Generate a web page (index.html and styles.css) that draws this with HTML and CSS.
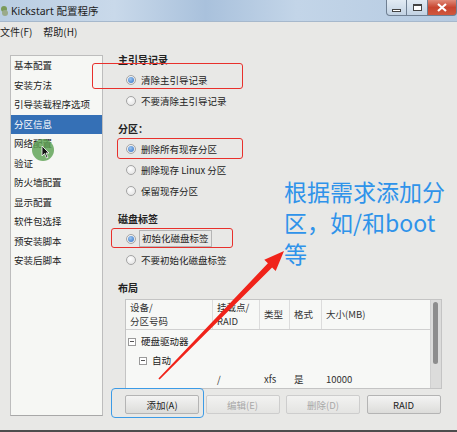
FILE: index.html
```html
<!DOCTYPE html>
<html lang="zh-CN">
<head>
  <meta charset="UTF-8" />
  <title>Kickstart 配置程序</title>
  <link rel="stylesheet" href="styles.css">
</head>
<body>
  <div class="window">

    <header class="titlebar">
      <svg class="app-icon" width="9" height="12" viewBox="0 0 9 12">
        <circle cx="4" cy="4" r="3" fill="#7a9a5a"/>
        <circle cx="5" cy="8" r="3" fill="#9aaa8a"/>
      </svg>
      <span class="title">Kickstart 配置程序</span>
      <div class="win-buttons">
        <span class="wb wb-min"><i></i></span>
        <span class="wb wb-max"><i></i></span>
        <span class="wb wb-close">
          <svg width="10" height="9" viewBox="0 0 10 9"><path d="M1 1 L9 8 M9 1 L1 8" stroke="#fff" stroke-width="2.2"/></svg>
        </span>
      </div>
    </header>

    <nav class="menubar">
      <span>文件(F)</span>
      <span>帮助(H)</span>
    </nav>

    <div class="content">
      <ul class="sidebar">
        <li>基本配置</li>
        <li>安装方法</li>
        <li>引导装载程序选项</li>
        <li class="active">分区信息</li>
        <li>网络配置</li>
        <li>验证</li>
        <li>防火墙配置</li>
        <li>显示配置</li>
        <li>软件包选择</li>
        <li>预安装脚本</li>
        <li>安装后脚本</li>
      </ul>

      <div class="panel">
        <section class="group">
          <h3>主引导记录</h3>
          <label class="radio checked"><span class="dot"></span>清除主引导记录</label>
          <label class="radio"><span class="dot"></span>不要清除主引导记录</label>
        </section>

        <section class="group">
          <h3>分区：</h3>
          <label class="radio checked"><span class="dot"></span>删除所有现存分区</label>
          <label class="radio"><span class="dot"></span>删除现存 Linux 分区</label>
          <label class="radio"><span class="dot"></span>保留现存分区</label>
        </section>

        <section class="group">
          <h3>磁盘标签</h3>
          <label class="radio checked"><span class="dot"></span><span class="focus">初始化磁盘标签</span></label>
          <label class="radio"><span class="dot"></span>不要初始化磁盘标签</label>
        </section>

        <section class="group">
          <h3>布局</h3>
          <div class="table">
            <div class="table-main">
              <div class="row head">
                <div class="cell">设备/<br>分区号码</div>
                <div class="cell">挂载点/<br>RAID</div>
                <div class="cell">类型</div>
                <div class="cell">格式</div>
                <div class="cell">大小(MB)</div>
              </div>
              <div class="tbody">
                <div class="tree"><span class="toggle"></span>硬盘驱动器</div>
                <div class="tree level2"><span class="toggle"></span>自动</div>
                <div class="row">
                  <div class="cell"></div>
                  <div class="cell">/</div>
                  <div class="cell">xfs</div>
                  <div class="cell">是</div>
                  <div class="cell">10000</div>
                </div>
              </div>
            </div>
            <div class="scrollbar"><span class="thumb"></span></div>
          </div>

          <div class="buttons">
            <button class="btn">添加(A)</button>
            <button class="btn" disabled>编辑(E)</button>
            <button class="btn" disabled>删除(D)</button>
            <button class="btn">RAID</button>
          </div>
        </section>
      </div>
    </div>

    <div class="bottom-edge"></div>

    <!-- 标注 -->
    <div class="mark mark-mbr"></div>
    <div class="mark mark-part"></div>
    <div class="mark mark-label"></div>
    <div class="mark-blue"></div>
    <div class="click-dot"></div>
    <svg class="cursor" width="9" height="14" viewBox="0 0 9 14">
      <path d="M1 1 L1 11 L3.5 8.5 L5.5 13 L7 12.3 L5 8 L8 8 Z" fill="#111" stroke="#fff" stroke-width="0.8"/>
    </svg>
    <p class="note">根据需求添加分<br>区，如/和boot<br>等</p>
    <svg class="arrow" width="457" height="432" viewBox="0 0 457 432">
      <polygon points="158.4,378.4 267.9,263.2 264.3,259.7 284,251 275.7,270.9 272.1,267.4 159.6,379.6" fill="#f0231a"/>
    </svg>
  </div>
</body>
</html>
```

FILE: styles.css
```css
* {
  box-sizing: border-box;
}

body {
  margin: 0;
  padding: 0;
  font-family: "Noto Sans CJK SC", "Noto Sans", sans-serif;
  font-size: 9.5px;
  color: #222;
  background: #e8e8e6;
}

.window {
  position: relative;
  width: 457px;
  height: 432px;
  overflow: hidden;
  background: #e8e8e6;
  display: flex;
  flex-direction: column;
}

/* 标题栏 */
.titlebar {
  height: 22px;
  display: flex;
  align-items: center;
  background: linear-gradient(to right, #b9cde2, #c9d9ea 25%, #a9c1dc 45%, #c3d5e8 65%, #b5cae1);
  border-bottom: 1px solid #a6b8cc;
}

.app-icon {
  margin-right: 2px;
}

.title {
  font-family: "Noto Sans", "Noto Sans CJK SC", sans-serif;
  font-size: 10.5px;
  color: #1c1c1c;
}

.win-buttons {
  margin-left: auto;
  align-self: flex-start;
  display: flex;
}

.wb {
  height: 16px;
  display: flex;
  align-items: center;
  justify-content: center;
  border: 1px solid #6f7f92;
  border-top: none;
  background: linear-gradient(#e2ebf4, #c2d2e3);
}

.wb-min {
  width: 21px;
  border-radius: 0 0 0 4px;
}

.wb-min i {
  display: block;
  width: 9px;
  height: 3px;
  margin-top: 5px;
  background: #fff;
  border: 1px solid #444;
}

.wb-max {
  width: 21px;
  border-left: none;
}

.wb-max i {
  display: block;
  width: 9px;
  height: 7px;
  border: 1px solid #444;
  border-top-width: 2px;
  background: #fff;
}

.wb-close {
  width: 29px;
  border-left: none;
  border-radius: 0 0 4px 0;
  background: linear-gradient(#e08a78, #c8452f 50%, #d0583e);
}

/* 菜单栏 */
.menubar {
  height: 18px;
  display: flex;
  align-items: center;
  gap: 11px;
  font-size: 10px;
}

/* 主体 */
.content {
  flex: 1;
  display: flex;
  align-items: flex-start;
}

.sidebar {
  list-style: none;
  margin: 15px 0 0 10px;
  padding: 0;
  width: 93px;
  height: 361px;
  background: #f6f7f4;
  border: 1px solid #bdbdbd;
  border-bottom-color: #a8a8a8;
}

.sidebar li {
  height: 19.5px;
  line-height: 19.5px;
  padding-left: 3px;
  white-space: nowrap;
}

.sidebar li.active {
  background: #3570b6;
  color: #fff;
}

.panel {
  margin-left: 15px;
  padding-top: 12px;
  width: 330px;
}

.group {
  margin-bottom: 10px;
}

.group h3 {
  margin: 0 0 1px;
  height: 16px;
  line-height: 16px;
  font-size: 10px;
  font-weight: 700;
}

.radio {
  display: flex;
  align-items: center;
  gap: 5px;
  height: 21px;
  padding-left: 8px;
  white-space: nowrap;
}

.dot {
  width: 10px;
  height: 10px;
  border-radius: 50%;
  border: 1px solid #a4a4a4;
  background: radial-gradient(circle at 40% 35%, #fff, #dedede);
  display: flex;
  align-items: center;
  justify-content: center;
}

.radio.checked .dot::after {
  content: "";
  width: 6px;
  height: 6px;
  border-radius: 50%;
  background: radial-gradient(circle at 40% 35%, #9cc6f2, #2f6fc4);
}

.focus {
  border: 1px solid #b5b5b5;
  padding: 0 2px;
  line-height: 15px;
  margin-left: -2px;
}

/* 布局表格 */
.table {
  margin: 3px 0 0 7px;
  width: 317px;
  height: 90px;
  display: flex;
  border: 1px solid #c4c4c4;
  background: #f7f8f6;
}

.table-main {
  flex: 1;
  overflow: hidden;
}

.row {
  display: grid;
  grid-template-columns: 87px 47px 30px 32px 1fr;
}

.row.head {
  height: 30px;
  border-bottom: 1px solid #d0d0d0;
}

.row.head .cell {
  border-right: 1px solid #dcdcdc;
  display: flex;
  align-items: center;
  line-height: 13.5px;
}

.row.head .cell:last-child {
  border-right: none;
}

.cell {
  padding-left: 4px;
  white-space: nowrap;
  color: #333;
}

.tbody {
  padding-top: 2px;
}

.tbody .row,
.tree {
  height: 19px;
  line-height: 19px;
}

.tree {
  display: flex;
  align-items: center;
  gap: 5px;
  padding-left: 2px;
}

.tree.level2 {
  padding-left: 13px;
}

.toggle {
  position: relative;
  width: 8px;
  height: 8px;
  border: 1px solid #9a9a9a;
  background: #fff;
}

.toggle::after {
  content: "";
  position: absolute;
  left: 1px;
  right: 1px;
  top: 2.5px;
  height: 1px;
  background: #555;
}

.scrollbar {
  width: 11px;
  background: #dcdcdb;
  border-left: 1px solid #d0d0d0;
  padding: 2px;
}

.thumb {
  display: block;
  width: 5px;
  height: 62px;
  border-radius: 3px;
  background: #8d8d8d;
}

.buttons {
  margin: 6px 0 0 7px;
  display: flex;
  gap: 6.5px;
}

.btn {
  width: 74px;
  height: 19px;
  padding: 0;
  font-family: "Noto Sans CJK SC", "Noto Sans", sans-serif;
  font-size: 9.5px;
  color: #222;
  border: 1px solid #b4b4b4;
  border-radius: 2px;
  background: linear-gradient(#f4f4f3, #dcdcda);
}

.btn:disabled {
  color: #a8a8a8;
  border-color: #cdcdcd;
  background: linear-gradient(#f2f2f1, #e4e4e2);
}

.bottom-edge {
  height: 2px;
  background: #4d4d4d;
}

/* 标注层 */
.mark {
  position: absolute;
  border: 1.5px solid #e8302c;
  border-radius: 3px;
}

.mark-mbr {
  left: 92px;
  top: 63px;
  width: 151px;
  height: 26px;
}

.mark-part {
  left: 117px;
  top: 138px;
  width: 126px;
  height: 21px;
}

.mark-label {
  left: 111px;
  top: 228px;
  width: 122px;
  height: 20px;
}

.mark-blue {
  position: absolute;
  left: 111px;
  top: 388px;
  width: 93px;
  height: 30px;
  border: 1px solid #3c9be6;
  border-radius: 4px;
}

.click-dot {
  position: absolute;
  left: 32px;
  top: 139px;
  width: 22px;
  height: 22px;
  border-radius: 50%;
  background: rgba(90, 160, 80, 0.8);
}

.cursor {
  position: absolute;
  left: 41px;
  top: 145px;
}

.note {
  position: absolute;
  left: 284px;
  top: 176px;
  margin: 0;
  font-family: "Noto Sans CJK SC", "Noto Sans", sans-serif;
  font-size: 23px;
  line-height: 31px;
  color: #2f93ea;
  white-space: nowrap;
}

.arrow {
  position: absolute;
  left: 0;
  top: 0;
}
```
